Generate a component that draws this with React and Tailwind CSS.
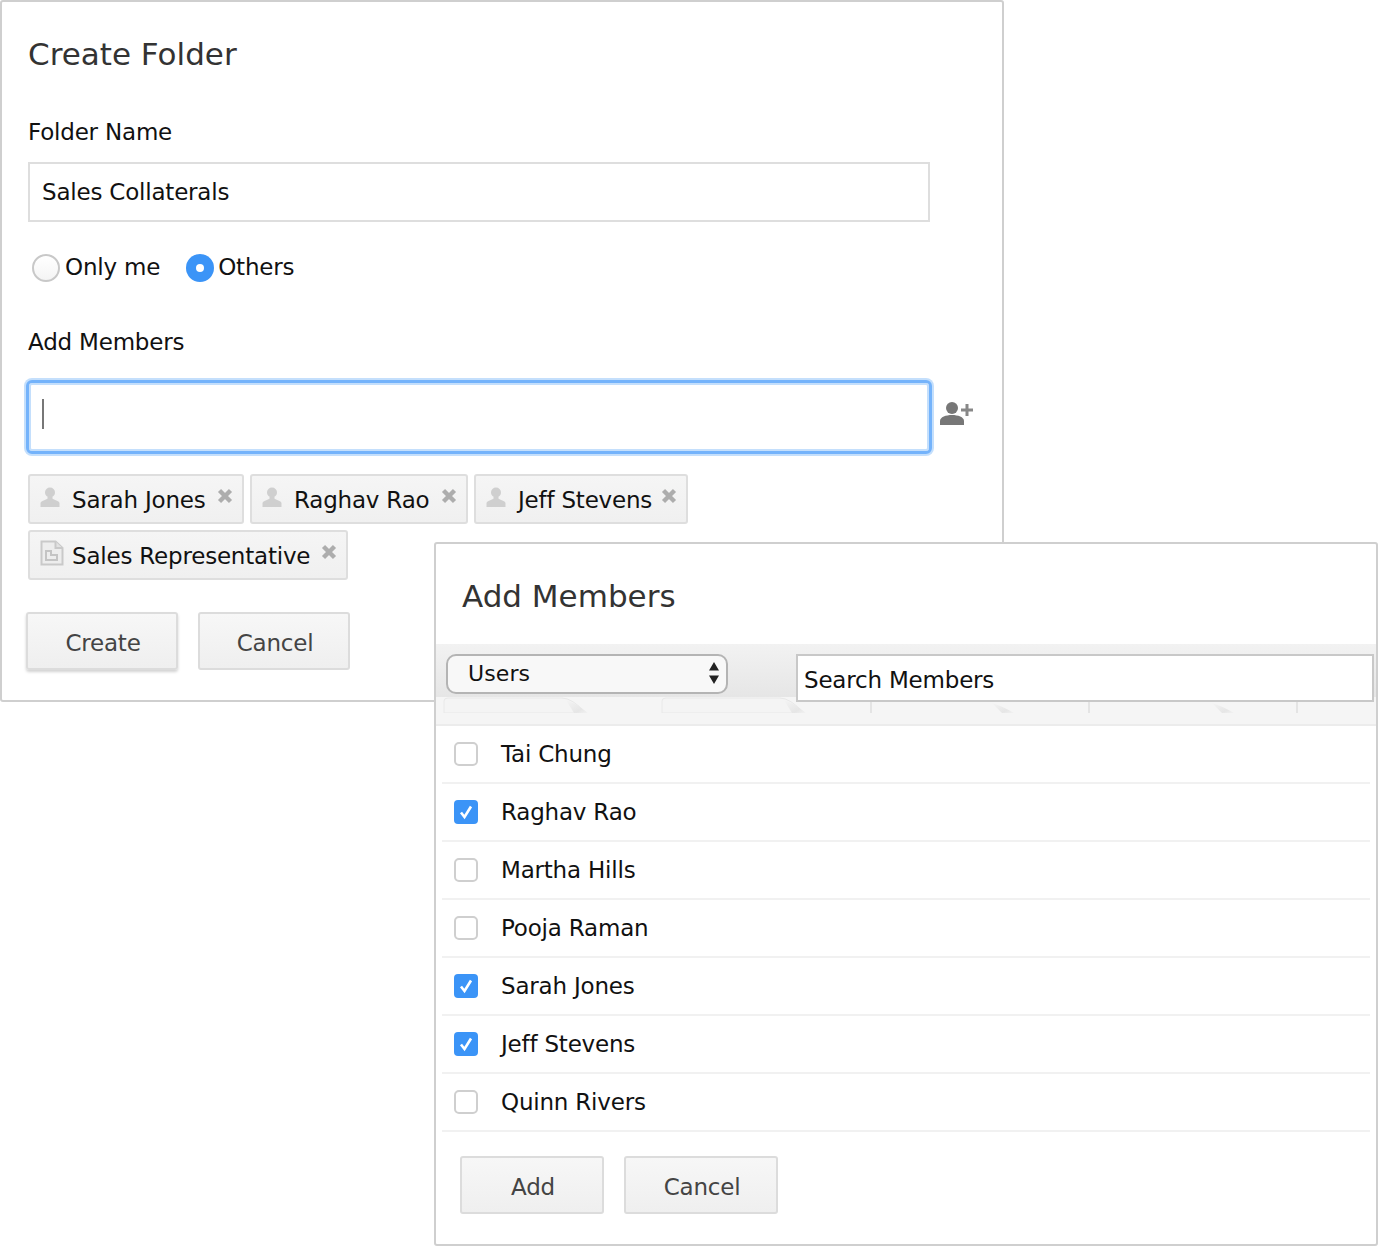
const font = "font-['DejaVu_Sans',sans-serif]";

const PersonIcon = () => (
  <svg width="20" height="22" viewBox="0 0 20 22" className="shrink-0">
    <circle cx="10" cy="6.5" r="5" fill="#cfcfcf" />
    <path d="M7.5 10.5h5v2.2l5.5 2.6c1 .5 1.5 1.2 1.5 2.2V21H.5v-3.5c0-1 .5-1.7 1.5-2.2l5.500-2.600z" fill="#cfcfcf" />
  </svg>
);

const RoleIcon = () => (
  <svg width="24" height="26" viewBox="0 0 24 26" className="shrink-0">
    <path d="M1.500 1.500h14l7 6.500v16.500h-21z" fill="#ededed" stroke="#c9c9c9" strokeWidth="2" />
    <path d="M15.500 1.500v6.500h7" fill="#e2e2e2" stroke="#c9c9c9" strokeWidth="2" />
    <path d="M6 11h5v4h6v5H6z" fill="none" stroke="#c4c4c4" strokeWidth="2" />
  </svg>
);

const CloseIcon = () => (
  <svg width="16" height="16" viewBox="0 0 16 16" className="shrink-0">
    <path d="M2.500 2.500l11 11M13.500 2.500l-11 11" stroke="#adadad" strokeWidth="4.400" />
  </svg>
);

const Chip = ({ label, width, role }) => (
  <div className={`flex h-[50px] items-center rounded-[3px] border-2 border-[#dedede] bg-gradient-to-b from-[#f5f5f5] to-[#f0f0f0] pl-[10px] ${width}`}>
    <span className="flex w-[32px] items-center -translate-y-[2px]">{role ? <RoleIcon /> : <PersonIcon />}</span>
    <span className="pt-[2px] text-[23px] leading-none tracking-[-0.2px] text-[#111]">{label}</span>
    <span className="ml-auto mr-[9px] -translate-y-[3px]"><CloseIcon /></span>
  </div>
);

const Button = ({ label, width, shadow }) => (
  <button className={`h-[58px] rounded-[3px] border-2 border-[#dcdcdc] bg-gradient-to-b from-[#f7f7f7] to-[#efefef] pl-[2px] pt-[5px] text-[23px] tracking-[-0.2px] text-[#444] ${width} ${shadow ? 'shadow-[0_2px_3px_rgba(0,0,0,0.18)]' : ''}`}>
    {label}
  </button>
);

const members = [
  { name: 'Tai Chung', checked: false },
  { name: 'Raghav Rao', checked: true },
  { name: 'Martha Hills', checked: false },
  { name: 'Pooja Raman', checked: false },
  { name: 'Sarah Jones', checked: true },
  { name: 'Jeff Stevens', checked: true },
  { name: 'Quinn Rivers', checked: false },
];

const MemberRow = ({ name, checked }) => (
  <div className="mx-[6px] flex h-[58px] items-center border-b-2 border-[#f1f1f1] pl-[12px]">
    {checked ? (
      <span className="flex h-[24px] w-[24px] items-center justify-center rounded-[4px] bg-[#3b94f7]">
        <svg width="18" height="18" viewBox="0 0 18 18">
          <path d="M4 9.500l3.500 4.500L14 3.500" fill="none" stroke="#fff" strokeWidth="2.600" />
        </svg>
      </span>
    ) : (
      <span className="h-[24px] w-[24px] rounded-[5px] border-2 border-[#cfcfcf] bg-white" />
    )}
    <span className="ml-[23px] text-[23px] leading-none tracking-[-0.2px] text-[#111]">{name}</span>
  </div>
);

const TabStrip = () => (
  <svg width="940" height="16" viewBox="0 0 940 16" className="absolute left-0 top-[53px]">
    <defs>
      <linearGradient id="tabFade" x1="0" x2="1" y1="0" y2="1">
        <stop offset="0" stopColor="#f4f4f4" />
        <stop offset="0.7" stopColor="#e6e6e6" />
        <stop offset="1" stopColor="#f2f2f2" />
      </linearGradient>
    </defs>
    <path d="M8 16V4Q8 1 12 1H126Q136 1 150 16Z" fill="#f4f4f4" stroke="#e8e8e8" />
    <path d="M226 16V4Q226 1 230 1H344Q354 1 368 16Z" fill="#f4f4f4" stroke="#e8e8e8" />
    <path d="M130 3Q140 6 152 16H138Z" fill="url(#tabFade)" />
    <path d="M348 3Q358 6 370 16H356Z" fill="url(#tabFade)" />
    <path d="M556 6Q566 9 578 16H566Z" fill="url(#tabFade)" />
    <path d="M776 6Q786 9 798 16H786Z" fill="url(#tabFade)" />
    <path d="M435 5v11M653 5v11M861 5v11" stroke="#e4e4e4" strokeWidth="2" />
  </svg>
);

export default function App() {
  return (
    <div className={`relative h-[1246px] w-[1378px] overflow-hidden bg-white ${font}`}>
      <div className="h-[702px] w-[1004px] rounded-[3px] border-2 border-[#cfcfcf] bg-white px-[26px] pt-[33px]">
        <h1 className="text-[31px] leading-[38px] text-[#333]">Create Folder</h1>

        <label className="mt-[45px] block text-[23px] leading-[28px] tracking-[-0.2px] text-[#111]">Folder Name</label>
        <div className="mt-[16px] flex h-[60px] w-[902px] items-center border-2 border-[#dedede] pl-[12px] text-[23px] tracking-[-0.2px] text-[#111]">
          Sales Collaterals
        </div>

        <div className="mt-[31px] flex h-[29px] items-center pl-[4px] text-[23px] tracking-[-0.2px] text-[#111]">
          <span className="h-[28px] w-[28px] rounded-full border-2 border-[#c8c8c8] bg-gradient-to-b from-white to-[#f4f4f4]" />
          <span className="ml-[5px]">Only me</span>
          <span className="ml-[26px] flex h-[28px] w-[28px] items-center justify-center rounded-full bg-[#3b94f7]">
            <span className="h-[8px] w-[8px] rounded-full bg-white" />
          </span>
          <span className="ml-[4px]">Others</span>
        </div>

        <label className="mt-[46px] block text-[23px] leading-[28px] tracking-[-0.2px] text-[#111]">Add Members</label>

        <div className="-ml-[2px] mt-[24px] flex items-center">
          <div className="flex h-[74px] w-[906px] items-center rounded-[6px] border-[3px] border-[#74b3fb] bg-white pb-[6px] pl-[13px] shadow-[0_0_0_2px_#c4dffc,inset_0_0_0_2px_#c4dffc]">
            <span className="h-[30px] w-[2px] bg-[#777]" />
          </div>
          <svg width="34" height="26" viewBox="0 0 34 26" className="ml-[8px] -translate-y-[3px]">
            <circle cx="12" cy="7" r="6" fill="#777" />
            <path d="M0 24v-4c0-4 6-6 12-6s12 2 12 6v4z" fill="#777" />
            <path d="M27 6v12M21 12h12" stroke="#888" strokeWidth="3" transform="translate(0 -3)" />
          </svg>
        </div>

        <div className="mt-[20px] flex flex-col gap-[6px]">
          <div className="flex gap-[6px]">
            <Chip label="Sarah Jones" width="w-[216px]" />
            <Chip label="Raghav Rao" width="w-[218px]" />
            <Chip label="Jeff Stevens" width="w-[214px]" />
          </div>
          <Chip label="Sales Representative" width="w-[320px]" role />
        </div>

        <div className="-ml-[2px] mt-[32px] flex gap-[20px]">
          <Button label="Create" width="w-[152px]" shadow />
          <Button label="Cancel" width="w-[152px]" />
        </div>
      </div>

      {/* dialog sits over the form */}
      <div className="absolute left-[434px] top-[542px] h-[704px] w-[944px] rounded-[3px] border-2 border-[#cfcfcf] bg-white">
        <h2 className="pl-[26px] pt-[33px] text-[31px] leading-[38px] text-[#333]">Add Members</h2>

        <div className="relative mt-[29px] h-[82px] border-b-2 border-[#ececec] bg-[#f5f5f5]">
          <div className="h-[53px] bg-gradient-to-b from-[#f2f2f2] to-[#e6e6e6]" />
          <TabStrip />
          <div className="absolute left-[10px] top-[10px] flex h-[40px] w-[282px] items-center rounded-[10px] border-2 border-[#b4b4b4] bg-[#f8f8f8] pb-[2px] pl-[20px] pr-[6px] text-[22px] tracking-[0.1px] text-[#111]">
            Users
            <svg width="12" height="24" viewBox="0 0 12 24" className="ml-auto">
              <path d="M6 1l5 8.500H1zM6 23l5-8.500H1z" fill="#222" />
            </svg>
          </div>
          <div className="absolute left-[360px] top-[10px] flex h-[48px] w-[578px] items-center border-2 border-[#c8c8c8] bg-white pl-[6px] pt-[4px] text-[23px] tracking-[-0.2px] text-[#111]">
            Search Members
          </div>
        </div>

        <div>
          {members.map((m) => (
            <MemberRow key={m.name} name={m.name} checked={m.checked} />
          ))}
        </div>

        <div className="mt-[24px] flex gap-[20px] pl-[24px]">
          <Button label="Add" width="w-[144px]" />
          <Button label="Cancel" width="w-[154px]" />
        </div>
      </div>
    </div>
  );
}
